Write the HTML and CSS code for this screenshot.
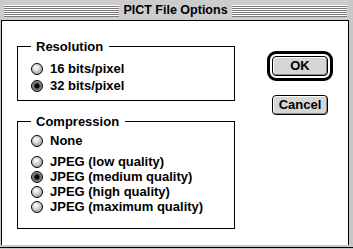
FILE: index.html
```html
<!DOCTYPE html>
<html>
<head>
<meta charset="utf-8">
<link rel="stylesheet" href="styles.css">
</head>
<body>
<div class="window">
  <div class="titlebar">
    <div class="stripes"></div>
    <div class="title">PICT File Options</div>
    <div class="stripes"></div>
  </div>
  <div class="content">
    <div class="groups">
      <fieldset class="group res">
        <legend>Resolution</legend>
        <div class="row tall"><span class="radio"></span>16 bits/pixel</div>
        <div class="row tall"><span class="radio on"></span>32 bits/pixel</div>
      </fieldset>
      <fieldset class="group comp">
        <legend>Compression</legend>
        <div class="row sep"><span class="radio"></span>None</div>
        <div class="row"><span class="radio"></span>JPEG (low quality)</div>
        <div class="row"><span class="radio on"></span>JPEG (medium quality)</div>
        <div class="row"><span class="radio"></span>JPEG (high quality)</div>
        <div class="row"><span class="radio"></span>JPEG (maximum quality)</div>
      </fieldset>
    </div>
    <div class="buttons">
      <div class="ring"><div class="btn">OK</div></div>
      <div class="btn cancel">Cancel</div>
    </div>
  </div>
</div>
</body>
</html>
```
FILE: styles.css
```css
html, body { margin: 0; padding: 0; background: #fff; }
body { font-family: "Liberation Sans", Arial, sans-serif; font-weight: bold; color: #000; }
.window {
  width: 353px; height: 249px; box-sizing: border-box;
  display: flex; flex-direction: column;
  background: #c8c8c8;
  padding: 0 4px 4px 1px;
  box-shadow: inset 0 -1px 0 #c8c8c8, inset 0 -2px 0 #000;
}
.titlebar {
  height: 20px; display: flex; align-items: center;
  padding: 0 2px 0 3px; background: #cccccc;
  flex: none;
}
.stripes {
  flex: 1; height: 12px; margin-top: 1px;
  background: repeating-linear-gradient(to bottom, #fff 0, #fff 1px, #7a7a7a 1px, #7a7a7a 2px);
}
.title { font-size: 12.5px; line-height: 14px; padding: 0 4px; }
.content {
  flex: 1; background: #fff;
  border: 1px solid #000; border-bottom: none;
  display: flex; padding: 18px 0 0 15px;
}
.groups { display: flex; flex-direction: column; gap: 13px; }
.group {
  margin: 0; width: 218px; box-sizing: border-box;
  border: 1px solid #000; font-size: 13px;
  padding: 0 0 0 13px;
}
.group legend { padding: 0 6px 0 5px; line-height: 15px; font-size: 13px; }
.res { padding-top: 6px; padding-bottom: 6px; }
.comp { padding-top: 4px; padding-bottom: 14px; }
.row { display: flex; align-items: center; height: 15px; line-height: 15px; gap: 7px; white-space: nowrap; }
.row.tall { height: 17px; }
.row.sep { margin-bottom: 6px; }
.radio {
  width: 12px; height: 12px; box-sizing: border-box; flex: none;
  border: 1px solid #000; border-radius: 50%;
  background: radial-gradient(circle at 40% 35%, #ffffff 0, #e0e0e0 30%, #a0a0a0 80%, #808080 100%);
}
.radio.on {
  background: radial-gradient(circle at 50% 50%, #000 0, #000 28%, #555 40%, #999 70%, #777 100%);
}
.buttons {
  margin-left: 32px; margin-top: 12px;
  display: flex; flex-direction: column; align-items: center; gap: 14px;
  width: 66px;
}
.ring {
  border: 3px solid #000; border-radius: 9px; padding: 2px;
  background: #fff;
}
.btn {
  width: 56px; height: 20px; box-sizing: border-box;
  border: 1px solid #000; border-radius: 4px;
  background: #d6d6d6;
  box-shadow: inset 1px 1px 0 #fff, inset -1px -1px 0 #8c8c8c;
  font-size: 13px; line-height: 18px; text-align: center;
}
```
